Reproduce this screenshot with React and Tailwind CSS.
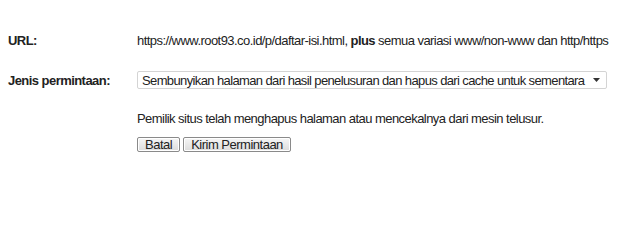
import React from 'react';

const font = { fontFamily: '"Liberation Sans", Arial, sans-serif' };

const Row = ({ label, children, className = '' }) => (
  <div className={`flex items-center ${className}`}>
    <div className="w-[129px] shrink-0 font-bold text-[#222]">{label}</div>
    <div className="flex-1 whitespace-nowrap">{children}</div>
  </div>
);

const Btn = ({ children }) => (
  <button className="h-[15px] px-[7px] flex items-center border border-[#8a8a8a] rounded-[2px] bg-gradient-to-b from-[#f6f6f6] to-[#dcdcdc] text-[13px] leading-none tracking-[-0.5px] text-[#222] shadow-[inset_0_0_0_1px_#fff]">
    {children}
  </button>
);

export default function App() {
  return (
    <div className="w-[640px] h-[227px] bg-white pl-2 pt-[33px] text-[13px] leading-[15px] tracking-[-0.55px] text-[#222]" style={font}>
      <Row label="URL:">
        <span>
          https://www.root93.co.id/p/daftar-isi.html, <b>plus</b> semua variasi www/non-www dan http/https
        </span>
      </Row>

      <Row label="Jenis permintaan:" className="mt-[23px]">
        <div className="w-[470px] h-[18px] border border-[#d4d4d4] rounded-[2px] flex items-center justify-between pl-[4px] pr-[6px] bg-white overflow-hidden">
          <span className="tracking-[-0.62px]">Sembunyikan halaman dari hasil penelusuran dan hapus dari cache untuk sementara</span>
          <svg width="7" height="4" viewBox="0 0 7 4" className="shrink-0">
            <path d="M0 0h7L3.5 4z" fill="#333" />
          </svg>
        </div>
      </Row>

      <div className="ml-[129px] mt-[22px]">
        <p>Pemilik situs telah menghapus halaman atau mencekalnya dari mesin telusur.</p>
        <div className="flex gap-[3px] mt-[11px]">
          <Btn>Batal</Btn>
          <Btn>Kirim Permintaan</Btn>
        </div>
      </div>
    </div>
  );
}
